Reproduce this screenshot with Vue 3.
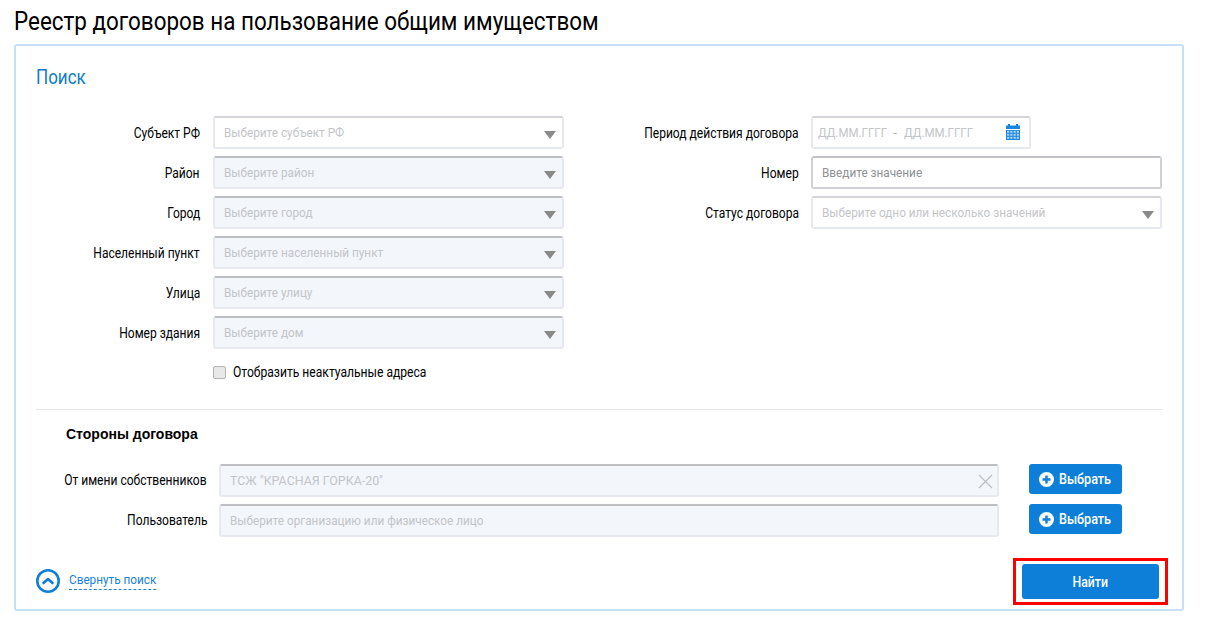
<template>
  <div class="page">
    <h1 class="title"><span class="squeeze">Реестр договоров на пользование общим имуществом</span></h1>
    <div class="card">
      <h2 class="card-title"><span class="squeeze">Поиск</span></h2>
      <div class="columns">
        <div class="col-left">
          <div class="row" v-for="item in addressFields" :key="item.label">
            <label class="label"><span class="squeeze-r">{{ item.label }}</span></label>
            <div class="field" :class="{ disabled: item.disabled }">
              <span class="placeholder">{{ item.placeholder }}</span>
              <span class="arrow"></span>
            </div>
          </div>
          <div class="check-row">
            <span class="checkbox"></span>
            <span class="check-label">Отобразить неактуальные адреса</span>
          </div>
        </div>
        <div class="col-right">
          <div class="row">
            <label class="label"><span class="squeeze-r">Период действия договора</span></label>
            <div class="field date">
              <span class="placeholder light">ДД.ММ.ГГГГ</span>
              <span class="dash">-</span>
              <span class="placeholder light">ДД.ММ.ГГГГ</span>
              <svg class="calendar" width="16" height="16" viewBox="0 0 16 16">
                <rect x="3" y="0" width="2" height="3" fill="#0e7fd9" />
                <rect x="11" y="0" width="2" height="3" fill="#0e7fd9" />
                <rect x="1" y="1.5" width="14" height="3.5" fill="#1a86e0" />
                <rect x="1" y="6" width="14" height="10" fill="#1a86e0" />
                <g fill="#a9d2f5">
                  <rect v-for="c in calendarCells" :key="c.x + '-' + c.y" :x="c.x" :y="c.y" width="2.3" height="2" />
                </g>
              </svg>
            </div>
          </div>
          <div class="row">
            <label class="label"><span class="squeeze-r">Номер</span></label>
            <div class="field strong">
              <span class="placeholder dark">Введите значение</span>
            </div>
          </div>
          <div class="row">
            <label class="label"><span class="squeeze-r">Статус договора</span></label>
            <div class="field">
              <span class="placeholder">Выберите одно или несколько значений</span>
              <span class="arrow"></span>
            </div>
          </div>
        </div>
      </div>
      <div class="divider"></div>
      <div class="parties">
        <h3 class="parties-title">Стороны договора</h3>
        <div class="party-row">
          <label class="label party-label"><span class="squeeze-r">От имени собственников</span></label>
          <div class="field disabled party-field">
            <span class="placeholder wide">ТСЖ "КРАСНАЯ ГОРКА-20"</span>
            <svg class="clear" width="15" height="15" viewBox="0 0 15 15">
              <path d="M1 1L14 14M14 1L1 14" stroke="#b9bec4" stroke-width="1.1" fill="none" />
            </svg>
          </div>
          <button class="pick">
            <svg width="15" height="15" viewBox="0 0 15 15">
              <circle cx="7.5" cy="7.5" r="7.5" fill="#fff" />
              <path d="M7.5 3.5v8M3.5 7.5h8" stroke="#0e7fd9" stroke-width="2.4" />
            </svg>
            <span class="pick-text">Выбрать</span>
          </button>
        </div>
        <div class="party-row">
          <label class="label party-label"><span class="squeeze-r">Пользователь</span></label>
          <div class="field disabled party-field">
            <span class="placeholder">Выберите организацию или физическое лицо</span>
          </div>
          <button class="pick">
            <svg width="15" height="15" viewBox="0 0 15 15">
              <circle cx="7.5" cy="7.5" r="7.5" fill="#fff" />
              <path d="M7.5 3.5v8M3.5 7.5h8" stroke="#0e7fd9" stroke-width="2.4" />
            </svg>
            <span class="pick-text">Выбрать</span>
          </button>
        </div>
      </div>
      <div class="footer">
        <div class="collapse">
          <svg width="24" height="24" viewBox="0 0 24 24">
            <circle cx="12" cy="12" r="10.7" fill="none" stroke="#0e7fd9" stroke-width="2.6" />
            <path d="M7.5 14l4.5-4 4.5 4" fill="none" stroke="#0e7fd9" stroke-width="2.6" stroke-linecap="round" stroke-linejoin="round" />
          </svg>
          <span class="collapse-link">Свернуть поиск</span>
        </div>
        <div class="find-frame">
          <button class="find"><span class="find-text">Найти</span></button>
        </div>
      </div>
    </div>
  </div>
</template>

<script setup>
const addressFields = [
  { label: 'Субъект РФ', placeholder: 'Выберите субъект РФ', disabled: false },
  { label: 'Район', placeholder: 'Выберите район', disabled: true },
  { label: 'Город', placeholder: 'Выберите город', disabled: true },
  { label: 'Населенный пункт', placeholder: 'Выберите населенный пункт', disabled: true },
  { label: 'Улица', placeholder: 'Выберите улицу', disabled: true },
  { label: 'Номер здания', placeholder: 'Выберите дом', disabled: true }
]

const calendarCells = []
for (const y of [6.8, 9.8, 12.8]) {
  for (const x of [2, 5.2, 8.5, 11.7]) {
    calendarCells.push({ x, y })
  }
}
</script>

<style>
html, body {
  margin: 0;
  background: #fff;
  overflow: hidden;
}
</style>

<style scoped>
.page {
  width: 1208px;
  height: 622px;
  font-family: Roboto, sans-serif;
  color: #000;
}

/* no condensed face installed, so the text is narrowed by hand */
.squeeze,
.squeeze-r,
.placeholder,
.check-label,
.pick-text,
.find-text,
.collapse-link {
  display: inline-block;
  white-space: nowrap;
  transform-origin: left center;
}

.squeeze {
  transform: scaleX(0.863);
}

.squeeze-r {
  transform: scaleX(0.86);
  transform-origin: right center;
}

.title {
  margin: 0;
  padding: 6px 0 0 14px;
  height: 44px;
  box-sizing: border-box;
  font-size: 26px;
  line-height: 30px;
  font-weight: 400;
  white-space: nowrap;
}

.card {
  width: 1170px;
  height: 567px;
  margin-left: 14px;
  box-sizing: border-box;
  border: 2px solid #c5e0f7;
  border-radius: 3px;
  padding: 19px 20px 0;
}

.card-title {
  margin: 0;
  height: 51px;
  font-size: 20px;
  line-height: 24px;
  font-weight: 400;
  color: #0e7cc4;
}

.card-title .squeeze {
  transform: scaleX(0.85);
}

.columns {
  display: flex;
  height: 293px;
}

.col-left {
  width: 528px;
  display: flex;
  flex-direction: column;
  gap: 7px;
}

.col-right {
  margin-left: 47px;
  display: flex;
  flex-direction: column;
  gap: 7px;
}

.row {
  display: flex;
  align-items: center;
  gap: 12px;
}

.col-left .row {
  gap: 13px;
}

.col-left .label {
  width: 164px;
}

.col-right .label {
  width: 188px;
}

.label {
  flex: none;
  display: flex;
  justify-content: flex-end;
  font-size: 14px;
}

.field {
  position: relative;
  width: 351px;
  height: 33px;
  box-sizing: border-box;
  border: 2px solid #e6e9ee;
  border-top-color: #d2d4d7;
  border-radius: 3px;
  background: #fff;
  display: flex;
  align-items: center;
  padding-left: 9px;
  font-size: 13px;
}

.field.disabled {
  background: #f3f6fb;
  border-top-color: #bdbfc2;
}

.field.strong {
  border-color: #cfd1d4;
  border-top-color: #bfc1c4;
}

.field.date {
  width: 220px;
  padding-left: 5px;
}

.placeholder {
  color: #c3c5c8;
  transform: scaleX(0.905);
}

.placeholder.wide {
  transform: scaleX(0.955);
}

.placeholder.dark {
  color: #8d9094;
}

.placeholder.light {
  width: 69px;
  transform: scaleX(0.885);
}

.dash {
  color: #a9acb0;
  width: 16px;
  text-align: center;
  margin-right: 1px;
}

.arrow {
  position: absolute;
  right: 6px;
  top: 13px;
  border-left: 6px solid transparent;
  border-right: 6px solid transparent;
  border-top: 8px solid #8a8a8a;
}

.calendar {
  position: absolute;
  right: 8px;
  top: 6px;
}

.check-row {
  display: flex;
  align-items: center;
  gap: 7px;
  margin: 8px 0 0 177px;
}

.checkbox {
  width: 11px;
  height: 11px;
  border: 1px solid #b4b4b4;
  border-radius: 2px;
  background: #e8e8e8;
}

.check-label {
  font-size: 14px;
  transform: scaleX(0.865);
}

.divider {
  height: 1px;
  width: 1126px;
  background: #e4e6e8;
}

.parties {
  padding: 16px 0 0;
}

.parties-title {
  margin: 0 0 22px 30px;
  height: 16px;
  font-family: "Liberation Sans", sans-serif;
  font-size: 14px;
  line-height: 16px;
  font-weight: 700;
}

.party-row {
  display: flex;
  align-items: flex-start;
  margin-bottom: 7px;
}

.party-label {
  width: 171px;
  line-height: 32px;
}

.party-field {
  width: 780px;
  margin-left: 12px;
}

.clear {
  position: absolute;
  right: 4px;
  top: 8px;
}

.pick {
  margin-left: 30px;
  width: 93px;
  height: 30px;
  box-sizing: border-box;
  border: 0;
  border-radius: 3px;
  background: #0e7fd9;
  color: #fff;
  font-family: inherit;
  font-size: 14px;
  font-weight: 500;
  display: flex;
  align-items: center;
  gap: 5px;
  padding: 0 0 0 10px;
}

.pick-text {
  transform: scaleX(0.9);
}

.footer {
  display: flex;
  justify-content: space-between;
  align-items: flex-start;
  margin-top: 21px;
}

.collapse {
  display: flex;
  align-items: center;
  gap: 9px;
  margin-top: 11px;
}

.collapse-link {
  color: #1a7fd6;
  font-size: 12px;
  line-height: 16px;
  border-bottom: 1px dashed #1a7fd6;
  padding-bottom: 1px;
  transform: scaleX(0.98);
}

.find-frame {
  margin-right: -6px;
  width: 155px;
  height: 47px;
  box-sizing: border-box;
  border: 3px solid #f00;
  padding: 3px 6px;
}

.find {
  display: block;
  width: 137px;
  height: 35px;
  border: 0;
  border-radius: 3px;
  background: #0e7fd9;
  color: #fff;
  font-family: inherit;
  font-size: 14px;
  font-weight: 500;
  padding: 0;
}

.find-text {
  transform: scaleX(0.88);
  transform-origin: center;
}
</style>
